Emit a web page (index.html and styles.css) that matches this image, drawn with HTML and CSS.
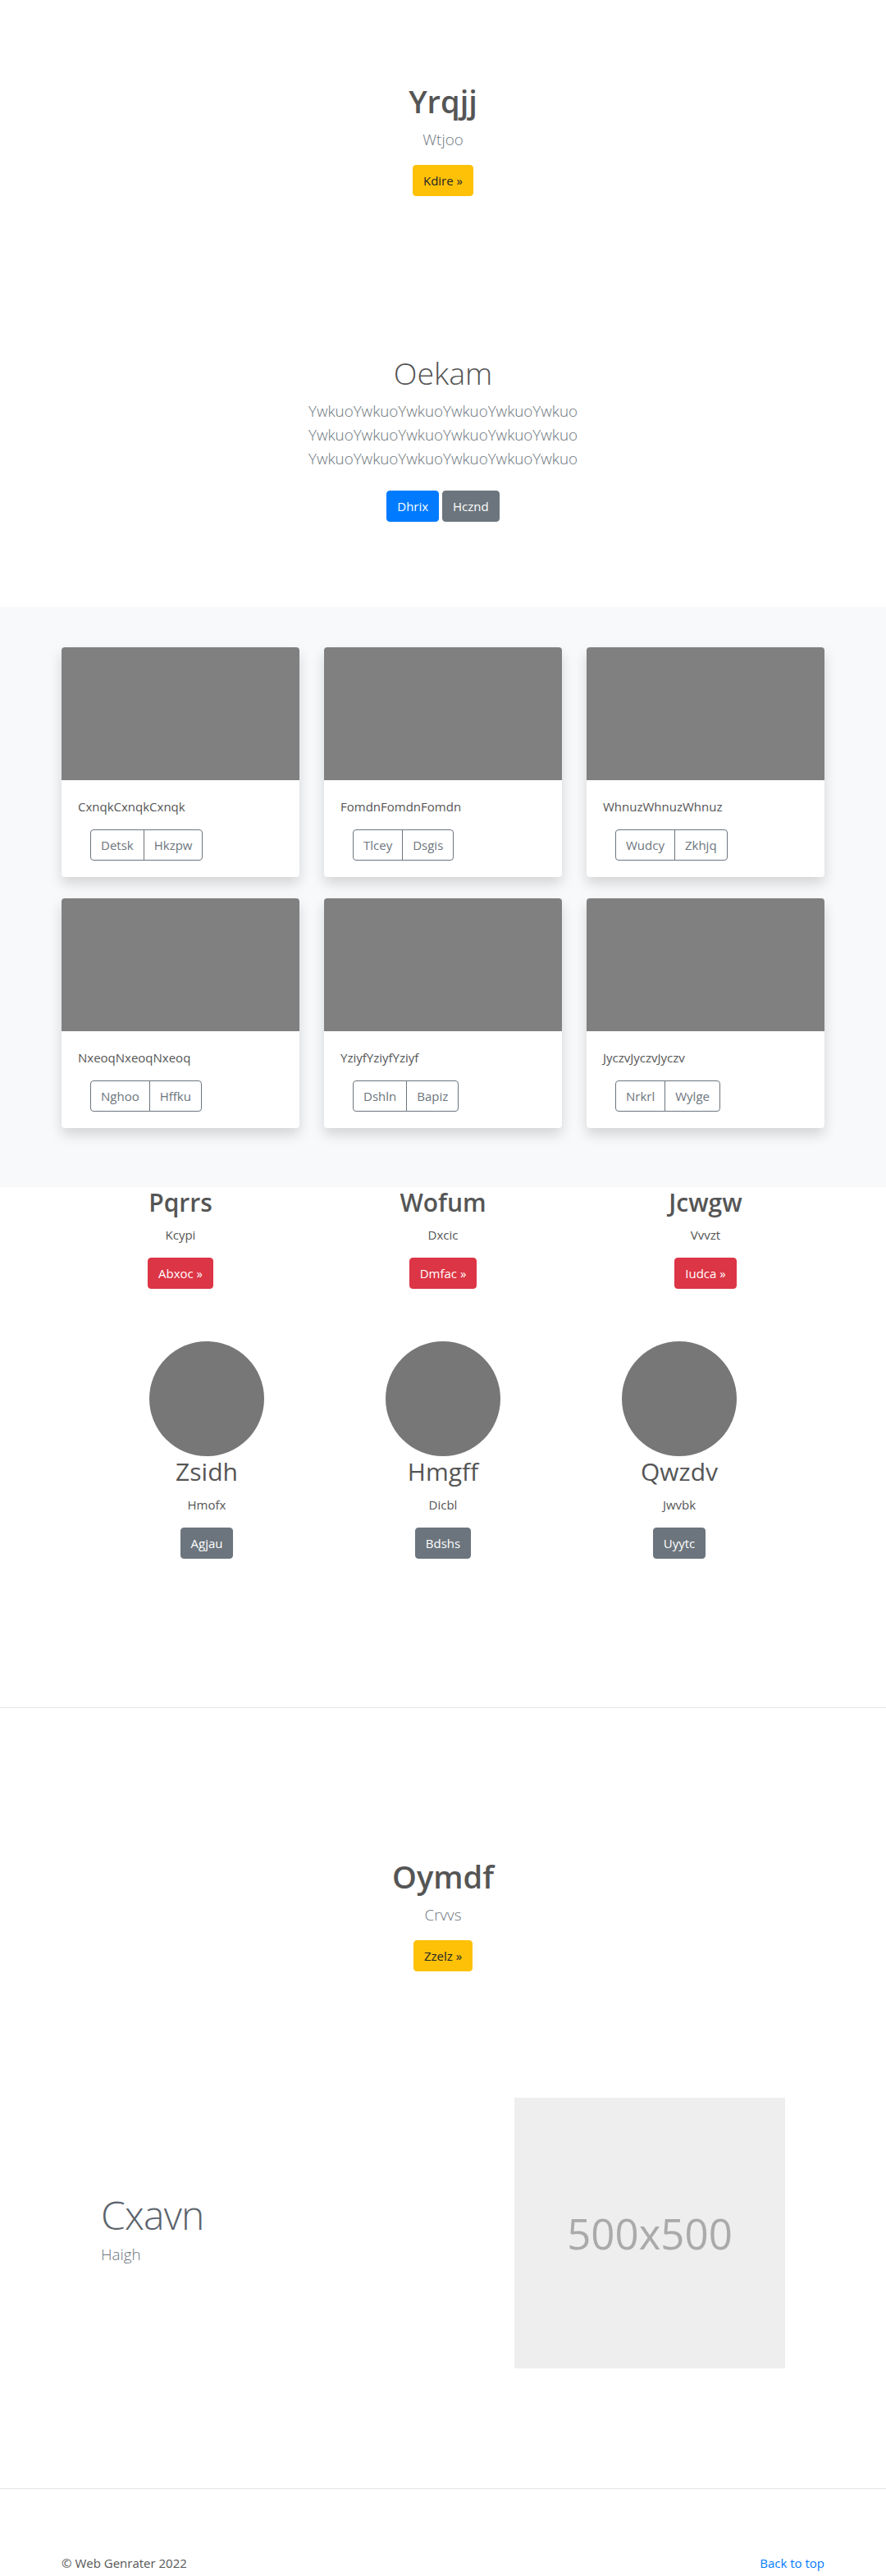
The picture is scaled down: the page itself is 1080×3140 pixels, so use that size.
FILE: index.html
```html
<!DOCTYPE html>
<html lang="en">
<head>
<meta charset="utf-8">
<title>Page</title>
<link rel="stylesheet" href="styles.css">
</head>
<body>
<section class="hero hero-first">
  <h1 class="hero-title">Yrqjj</h1>
  <p class="lead">Wtjoo</p>
  <a class="btn btn-warning" href="#">Kdire »</a>
</section>

<section class="hero hero-album">
  <h1 class="album-title">Oekam</h1>
  <p class="lead album-lead">YwkuoYwkuoYwkuoYwkuoYwkuoYwkuo YwkuoYwkuoYwkuoYwkuoYwkuoYwkuo YwkuoYwkuoYwkuoYwkuoYwkuoYwkuo</p>
  <p class="btn-line"><a class="btn btn-primary" href="#">Dhrix</a> <a class="btn btn-secondary" href="#">Hcznd</a></p>
</section>

<section class="album">
  <div class="card-grid">
    <div class="card"><div class="card-img"></div><div class="card-body"><p class="card-text">CxnqkCxnqkCxnqk</p><div class="btn-group"><a class="btn btn-outline" href="#">Detsk</a><a class="btn btn-outline" href="#">Hkzpw</a></div></div></div>
    <div class="card"><div class="card-img"></div><div class="card-body"><p class="card-text">FomdnFomdnFomdn</p><div class="btn-group"><a class="btn btn-outline" href="#">Tlcey</a><a class="btn btn-outline" href="#">Dsgis</a></div></div></div>
    <div class="card"><div class="card-img"></div><div class="card-body"><p class="card-text">WhnuzWhnuzWhnuz</p><div class="btn-group"><a class="btn btn-outline" href="#">Wudcy</a><a class="btn btn-outline" href="#">Zkhjq</a></div></div></div>
    <div class="card"><div class="card-img"></div><div class="card-body"><p class="card-text">NxeoqNxeoqNxeoq</p><div class="btn-group"><a class="btn btn-outline" href="#">Nghoo</a><a class="btn btn-outline" href="#">Hffku</a></div></div></div>
    <div class="card"><div class="card-img"></div><div class="card-body"><p class="card-text">YziyfYziyfYziyf</p><div class="btn-group"><a class="btn btn-outline" href="#">Dshln</a><a class="btn btn-outline" href="#">Bapiz</a></div></div></div>
    <div class="card"><div class="card-img"></div><div class="card-body"><p class="card-text">JyczvJyczvJyczv</p><div class="btn-group"><a class="btn btn-outline" href="#">Nrkrl</a><a class="btn btn-outline" href="#">Wylge</a></div></div></div>
  </div>
</section>

<section class="features">
  <div class="feature-row">
    <div class="feature">
      <h2 class="feature-title">Pqrrs</h2>
      <p>Kcypi</p>
      <p><a class="btn btn-danger" href="#">Abxoc »</a></p>
    </div>
    <div class="feature">
      <h2 class="feature-title">Wofum</h2>
      <p>Dxcic</p>
      <p><a class="btn btn-danger" href="#">Dmfac »</a></p>
    </div>
    <div class="feature">
      <h2 class="feature-title">Jcwgw</h2>
      <p>Vvvzt</p>
      <p><a class="btn btn-danger" href="#">Iudca »</a></p>
    </div>
  </div>
  <div class="team-row">
    <div class="member">
      <div class="avatar"></div>
      <h2 class="member-name">Zsidh</h2>
      <p>Hmofx</p>
      <p><a class="btn btn-secondary" href="#">Agjau</a></p>
    </div>
    <div class="member">
      <div class="avatar"></div>
      <h2 class="member-name">Hmgff</h2>
      <p>Dicbl</p>
      <p><a class="btn btn-secondary" href="#">Bdshs</a></p>
    </div>
    <div class="member">
      <div class="avatar"></div>
      <h2 class="member-name">Qwzdv</h2>
      <p>Jwvbk</p>
      <p><a class="btn btn-secondary" href="#">Uyytc</a></p>
    </div>
  </div>
</section>

<hr class="divider">

<section class="hero hero-second">
  <h1 class="hero-title">Oymdf</h1>
  <p class="lead">Crvvs</p>
  <a class="btn btn-warning" href="#">Zzelz »</a>
</section>

<section class="featurette">
  <div class="featurette-text">
    <h2 class="featurette-heading">Cxavn</h2>
    <p class="lead featurette-lead">Haigh</p>
  </div>
  <div class="placeholder">500x500</div>
</section>

<footer class="footer">
  <p class="copy">© Web Genrater 2022</p>
  <a class="back" href="#">Back to top</a>
</footer>
</body>
</html>
```

FILE: styles.css
```css
* { box-sizing: border-box; }

body {
  margin: 0;
  font-family: "Open Sans", "Noto Sans", "Liberation Sans", sans-serif;
  font-size: 15px;
  line-height: 24px;
  color: #555;
  background: #fff;
}

h1, h2, p { margin: 0; }

.btn {
  display: inline-block;
  font-size: 15px;
  line-height: 24px;
  padding: 6px 12px;
  border: 1px solid transparent;
  border-radius: 4px;
  text-decoration: none;
  vertical-align: middle;
}
.btn-warning { background: #ffc107; border-color: #ffc107; color: #212529; }
.btn-primary { background: #007bff; border-color: #007bff; color: #fff; }
.btn-secondary { background: #6c757d; border-color: #6c757d; color: #fff; }
.btn-danger { background: #dc3545; border-color: #dc3545; color: #fff; }
.btn-outline { background: transparent; border-color: #6c757d; color: #6c757d; }

.hero {
  text-align: center;
  padding: 96px 15px;
}
.hero-first { padding-top: 99px; }
.hero-title {
  font-size: 38px;
  font-weight: 600;
  line-height: 48px;
  margin-bottom: 8px;
}
.lead {
  font-size: 18.8px;
  font-weight: 300;
  line-height: 30px;
  color: #6c757d;
  margin-bottom: 16px;
}
.album-title {
  font-size: 37.6px;
  font-weight: 300;
  line-height: 48px;
  margin-bottom: 8px;
}
.album-lead {
  width: 360px;
  margin: 0 auto 16px;
  line-height: 29px;
}
.btn-line .btn { margin: 8px 0; }

.album {
  background: #f8f9fa;
  padding: 49px 0 72px;
}
.card-grid {
  width: 930px;
  margin: 0 auto;
  display: grid;
  grid-template-columns: repeat(3, 290px);
  column-gap: 30px;
  row-gap: 26px;
}
.card {
  background: #fff;
  border-radius: 4px;
  overflow: hidden;
  box-shadow: 0 8px 16px rgba(0, 0, 0, 0.15);
}
.card-img {
  height: 162px;
  background: #808080;
}
.card-body { padding: 20px; }
.card-text { margin-bottom: 16px; }
.btn-group {
  display: inline-flex;
  margin-left: 15px;
}
.btn-group .btn:first-child { border-radius: 4px 0 0 4px; }
.btn-group .btn:last-child { border-radius: 0 4px 4px 0; margin-left: -1px; }

.feature-row {
  width: 960px;
  margin: 0 auto;
  display: grid;
  grid-template-columns: repeat(3, 1fr);
  text-align: center;
}
.feature { padding: 0 15px; }
.feature-title {
  font-size: 30px;
  font-weight: 600;
  line-height: 38.4px;
  margin-bottom: 8px;
}
.feature p, .member p { margin-bottom: 16px; }

.team-row {
  width: 864px;
  margin: 48px auto 0;
  display: grid;
  grid-template-columns: repeat(3, 1fr);
  text-align: center;
}
.avatar {
  width: 140px;
  height: 140px;
  border-radius: 50%;
  background: #777;
  margin: 0 auto;
}
.member-name {
  font-size: 30px;
  font-weight: 400;
  line-height: 38.4px;
  margin-bottom: 8px;
}

.divider {
  border: 0;
  border-top: 1px solid #e5e5e5;
  margin: 165px 0 0;
}
.hero-second { padding-top: 181px; padding-bottom: 154px; }

.featurette {
  width: 834px;
  margin: 0 auto;
  display: grid;
  grid-template-columns: 474px 330px;
  column-gap: 30px;
  align-items: center;
}
.featurette-heading {
  font-size: 48px;
  font-weight: 300;
  line-height: 50px;
  letter-spacing: -0.8px;
  color: #5b636b;
  margin-bottom: 8px;
}
.featurette-lead { margin-bottom: 6px; }
.placeholder {
  width: 330px;
  height: 330px;
  background: #eee;
  color: #aaa;
  font-size: 51px;
  display: flex;
  align-items: center;
  justify-content: center;
}

.footer {
  margin-top: 146px;
  border-top: 1px solid #e5e5e5;
  padding: 78px 75px 48px;
  display: flex;
  justify-content: space-between;
}
.back { color: #007bff; text-decoration: none; }
```
